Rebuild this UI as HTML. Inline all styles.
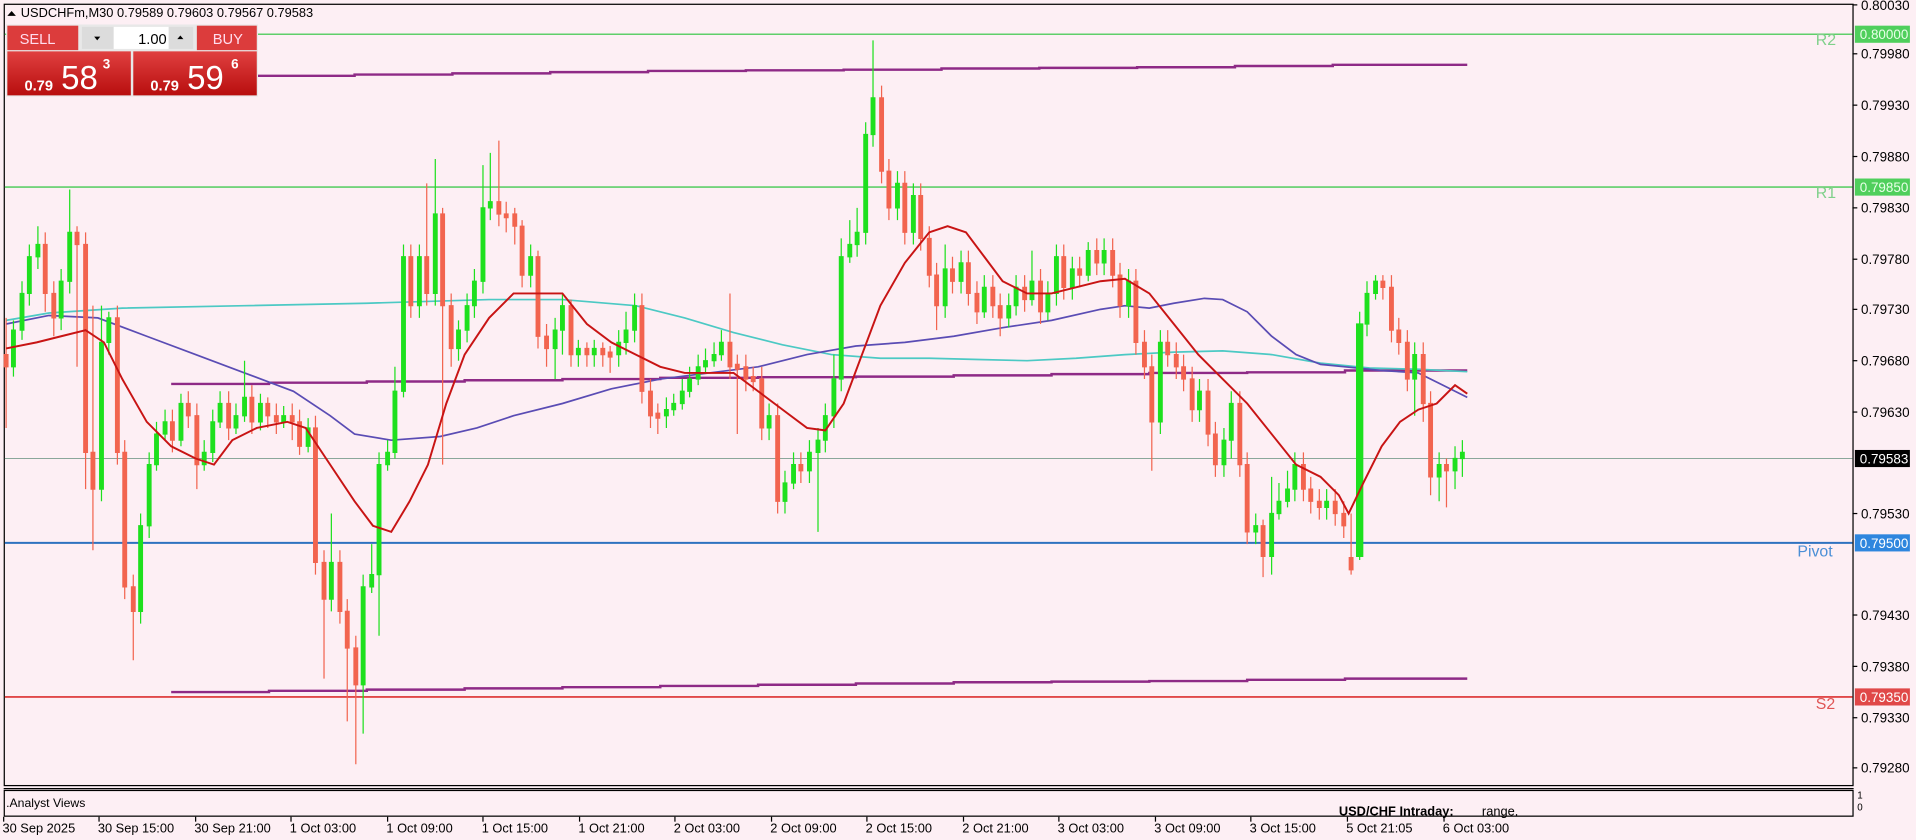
<!DOCTYPE html>
<html><head><meta charset="utf-8"><style>
html,body{margin:0;padding:0;background:#fdeff4;overflow:hidden}
svg{display:block}
text{font-family:"Liberation Sans",sans-serif}
</style></head><body>
<svg width="1916" height="840" viewBox="0 0 1567 687" preserveAspectRatio="none" xmlns="http://www.w3.org/2000/svg">
<rect width="1567" height="687" fill="#fdeff4"/>
<!-- chart frame -->
<rect x="3.5" y="3.5" width="1512" height="639" fill="none" stroke="#000" stroke-width="1"/>
<!-- levels -->
<line x1="4" y1="28" x2="1515" y2="28" stroke="#5fcf6a" stroke-width="1.3"/>
<line x1="4" y1="153" x2="1515" y2="153" stroke="#5fcf6a" stroke-width="1.3"/>
<line x1="4" y1="375" x2="1515" y2="375" stroke="#8aa79a" stroke-width="0.8"/>
<line x1="4" y1="444" x2="1515" y2="444" stroke="#2e72c0" stroke-width="1.6"/>
<line x1="4" y1="570" x2="1515" y2="570" stroke="#e04848" stroke-width="1.6"/>
<text x="1485" y="37" font-size="13" fill="#7fd08a">R2</text>
<text x="1485" y="162" font-size="13" fill="#7fd08a">R1</text>
<text x="1470" y="455" font-size="13" fill="#4b8fd6">Pivot</text>
<text x="1485" y="580" font-size="13" fill="#e05555">S2</text>
<!-- purple pivot lines -->
<g stroke="#8e2a86" stroke-width="2" fill="none">
<path d="M210 62H290V61H370V60H450V59H530V58H610V57.5H690V57H770V56H850V55.5H930V55H1010V54H1090V53H1200"/>
<path d="M140 314H220V313H300V312H380V311H460V310H540V309H620V308.5H700V308H780V307H860V306H940V305H1020V304.5H1100V303H1200"/>
<path d="M140 566H220V565H300V564H380V563H460V562H540V561H620V560H700V559H780V558H860V557.5H940V557H1020V556H1100V555H1200"/>
</g>
<!-- cyan MA -->
<polyline fill="none" stroke="#4cc9c4" stroke-width="1.4" points="5,262 40,256 100,252 200,250 300,248 400,245 460,245 520,250 560,260 600,272 640,282 680,290 720,293 760,293 800,294 840,295 880,293 920,290 960,288 1000,287 1040,290 1080,297 1120,301 1160,302 1200,304"/>
<!-- blue MA -->
<polyline fill="none" stroke="#5a4cb4" stroke-width="1.4" points="5,265 40,258 80,260 120,275 160,290 200,305 240,320 270,340 290,355 320,360 360,357 390,350 420,340 460,330 500,318 540,310 580,305 620,300 660,290 700,283 740,280 780,275 820,268 860,262 900,253 920,250 940,252 960,248 985,244 1000,245 1020,255 1040,275 1060,290 1080,298 1100,300 1130,303 1160,305 1180,315 1200,325"/>
<!-- candles green -->
<g fill="#1ee01e" stroke="#1ee01e" stroke-width="1">
<path d="M11 262V308M9.5 270h3v30h-3z"/>
<path d="M18 230V278M16.5 240h3v30h-3z"/>
<path d="M24 200V250M22.5 210h3v30h-3z"/>
<path d="M31 185V220M29.5 200h3v10h-3z"/>
<path d="M50 220V270M48.5 230h3v30h-3z"/>
<path d="M57 155V240M55.5 190h3v40h-3z"/>
<path d="M83 250V410M81.5 280h3v120h-3z"/>
<path d="M89 255V290M87.5 260h3v20h-3z"/>
<path d="M115 420V510M113.5 430h3v70h-3z"/>
<path d="M122 370V440M120.5 380h3v50h-3z"/>
<path d="M128 345V385M126.5 355h3v25h-3z"/>
<path d="M135 335V360M133.5 345h3v10h-3z"/>
<path d="M148 322V365M146.5 330h3v30h-3z"/>
<path d="M167 360V385M165.5 370h3v10h-3z"/>
<path d="M174 335V378M172.5 345h3v25h-3z"/>
<path d="M180 320V350M178.5 330h3v15h-3z"/>
<path d="M193 330V355M191.5 340h3v10h-3z"/>
<path d="M200 295V345M198.5 325h3v15h-3z"/>
<path d="M213 322V352M211.5 330h3v15h-3z"/>
<path d="M232 332V350M230.5 340h3v5h-3z"/>
<path d="M252 342V370M250.5 350h3v15h-3z"/>
<path d="M271 420V500M269.5 460h3v30h-3z"/>
<path d="M297 470V600M295.5 480h3v80h-3z"/>
<path d="M304 445V485M302.5 470h3v10h-3z"/>
<path d="M310 370V520M308.5 380h3v90h-3z"/>
<path d="M317 360V385M315.5 370h3v10h-3z"/>
<path d="M323 300V375M321.5 320h3v50h-3z"/>
<path d="M330 200V325M328.5 210h3v110h-3z"/>
<path d="M343 200V260M341.5 210h3v40h-3z"/>
<path d="M356 130V250M354.5 175h3v65h-3z"/>
<path d="M375 262V295M373.5 270h3v15h-3z"/>
<path d="M382 240V280M380.5 250h3v20h-3z"/>
<path d="M388 220V260M386.5 230h3v20h-3z"/>
<path d="M395 135V240M393.5 170h3v60h-3z"/>
<path d="M401 125V180M399.5 165h3v5h-3z"/>
<path d="M434 200V235M432.5 210h3v15h-3z"/>
<path d="M454 260V310M452.5 270h3v15h-3z"/>
<path d="M460 240V290M458.5 250h3v20h-3z"/>
<path d="M473 278V300M471.5 285h3v5h-3z"/>
<path d="M486 278V300M484.5 285h3v5h-3z"/>
<path d="M506 270V300M504.5 280h3v10h-3z"/>
<path d="M512 255V290M510.5 270h3v10h-3z"/>
<path d="M519 240V280M517.5 250h3v20h-3z"/>
<path d="M545 325V350M543.5 335h3v5h-3z"/>
<path d="M551 322V340M549.5 330h3v5h-3z"/>
<path d="M558 310V335M556.5 320h3v10h-3z"/>
<path d="M564 300V325M562.5 310h3v10h-3z"/>
<path d="M571 290V315M569.5 300h3v10h-3z"/>
<path d="M577 285V305M575.5 295h3v5h-3z"/>
<path d="M584 280V300M582.5 290h3v5h-3z"/>
<path d="M590 270V295M588.5 280h3v10h-3z"/>
<path d="M629 330V360M627.5 340h3v10h-3z"/>
<path d="M642 385V420M640.5 395h3v15h-3z"/>
<path d="M649 370V400M647.5 380h3v15h-3z"/>
<path d="M662 360V395M660.5 370h3v15h-3z"/>
<path d="M669 350V435M667.5 360h3v10h-3z"/>
<path d="M675 330V370M673.5 340h3v20h-3z"/>
<path d="M682 290V350M680.5 310h3v30h-3z"/>
<path d="M688 195V320M686.5 210h3v100h-3z"/>
<path d="M695 180V215M693.5 200h3v10h-3z"/>
<path d="M701 170V210M699.5 190h3v10h-3z"/>
<path d="M708 100V200M706.5 110h3v80h-3z"/>
<path d="M714 33V120M712.5 80h3v30h-3z"/>
<path d="M734 140V180M732.5 150h3v20h-3z"/>
<path d="M747 150V200M745.5 160h3v30h-3z"/>
<path d="M773 200V260M771.5 220h3v30h-3z"/>
<path d="M786 205V240M784.5 215h3v15h-3z"/>
<path d="M805 225V260M803.5 235h3v20h-3z"/>
<path d="M825 240V268M823.5 250h3v10h-3z"/>
<path d="M831 225V258M829.5 235h3v15h-3z"/>
<path d="M844 205V250M842.5 230h3v15h-3z"/>
<path d="M857 230V262M855.5 240h3v15h-3z"/>
<path d="M864 200V250M862.5 210h3v30h-3z"/>
<path d="M877 210V245M875.5 220h3v15h-3z"/>
<path d="M890 198V230M888.5 205h3v20h-3z"/>
<path d="M903 195V225M901.5 205h3v10h-3z"/>
<path d="M923 220V260M921.5 230h3v20h-3z"/>
<path d="M949 270V355M947.5 280h3v65h-3z"/>
<path d="M981 310V345M979.5 320h3v15h-3z"/>
<path d="M1001 350V390M999.5 360h3v20h-3z"/>
<path d="M1007 320V375M1005.5 330h3v30h-3z"/>
<path d="M1027 420V445M1025.5 430h3v5h-3z"/>
<path d="M1040 390V470M1038.5 420h3v35h-3z"/>
<path d="M1046 395V425M1044.5 410h3v10h-3z"/>
<path d="M1053 385V415M1051.5 400h3v10h-3z"/>
<path d="M1059 370V410M1057.5 380h3v20h-3z"/>
<path d="M1085 400V425M1083.5 410h3v5h-3z"/>
<path d="M1112 255V458M1109.5 265h5v190h-5z"/>
<path d="M1118 230V275M1116.5 240h3v25h-3z"/>
<path d="M1125 225V245M1123.5 230h3v10h-3z"/>
<path d="M1157 280V340M1155.5 290h3v20h-3z"/>
<path d="M1177 370V410M1175.5 380h3v10h-3z"/>
<path d="M1190 365V400M1188.5 375h3v10h-3z"/>
<path d="M1196 360V390M1194.5 370h3v5h-3z"/>
</g>
<!-- candles red -->
<g fill="#f2644f" stroke="#f2644f" stroke-width="1">
<path d="M5 260V350M3.5 290h3v10h-3z"/>
<path d="M37 190V255M35.5 200h3v40h-3z"/>
<path d="M44 230V275M42.5 240h3v20h-3z"/>
<path d="M63 185V300M61.5 190h3v10h-3z"/>
<path d="M70 190V400M68.5 200h3v170h-3z"/>
<path d="M76 250V450M74.5 370h3v30h-3z"/>
<path d="M96 250V380M94.5 260h3v110h-3z"/>
<path d="M102 360V490M100.5 370h3v110h-3z"/>
<path d="M109 470V540M107.5 480h3v20h-3z"/>
<path d="M141 335V370M139.5 345h3v15h-3z"/>
<path d="M154 320V350M152.5 330h3v10h-3z"/>
<path d="M161 330V400M159.5 340h3v40h-3z"/>
<path d="M187 320V360M185.5 330h3v20h-3z"/>
<path d="M206 315V355M204.5 325h3v20h-3z"/>
<path d="M219 325V350M217.5 330h3v10h-3z"/>
<path d="M226 330V355M224.5 340h3v5h-3z"/>
<path d="M239 330V360M237.5 340h3v5h-3z"/>
<path d="M245 335V372M243.5 345h3v20h-3z"/>
<path d="M258 340V470M256.5 350h3v110h-3z"/>
<path d="M265 450V555M263.5 460h3v30h-3z"/>
<path d="M278 450V510M276.5 460h3v40h-3z"/>
<path d="M284 490V590M282.5 500h3v30h-3z"/>
<path d="M291 520V625M289.5 530h3v30h-3z"/>
<path d="M336 200V260M334.5 210h3v40h-3z"/>
<path d="M349 150V250M347.5 210h3v30h-3z"/>
<path d="M362 170V380M360.5 175h3v75h-3z"/>
<path d="M369 240V300M367.5 250h3v35h-3z"/>
<path d="M408 115V185M406.5 165h3v10h-3z"/>
<path d="M414 165V190M412.5 175h3v3h-3z"/>
<path d="M421 170V200M419.5 175h3v10h-3z"/>
<path d="M427 180V235M425.5 185h3v40h-3z"/>
<path d="M440 205V285M438.5 210h3v65h-3z"/>
<path d="M447 265V300M445.5 275h3v10h-3z"/>
<path d="M467 245V300M465.5 250h3v40h-3z"/>
<path d="M480 280V300M478.5 285h3v5h-3z"/>
<path d="M493 280V300M491.5 285h3v5h-3z"/>
<path d="M499 283V305M497.5 288h3v4h-3z"/>
<path d="M525 240V330M523.5 250h3v70h-3z"/>
<path d="M532 310V350M530.5 320h3v20h-3z"/>
<path d="M538 330V355M536.5 338h3v4h-3z"/>
<path d="M597 240V310M595.5 280h3v20h-3z"/>
<path d="M603 290V355M601.5 298h3v4h-3z"/>
<path d="M610 290V320M608.5 300h3v10h-3z"/>
<path d="M616 300V320M614.5 308h3v4h-3z"/>
<path d="M623 300V360M621.5 310h3v40h-3z"/>
<path d="M636 330V420M634.5 340h3v70h-3z"/>
<path d="M655 370V395M653.5 380h3v5h-3z"/>
<path d="M721 70V150M719.5 80h3v60h-3z"/>
<path d="M727 130V180M725.5 140h3v30h-3z"/>
<path d="M740 140V200M738.5 150h3v40h-3z"/>
<path d="M753 150V205M751.5 160h3v35h-3z"/>
<path d="M760 185V235M758.5 195h3v30h-3z"/>
<path d="M766 215V270M764.5 225h3v25h-3z"/>
<path d="M779 210V240M777.5 220h3v10h-3z"/>
<path d="M792 205V250M790.5 215h3v25h-3z"/>
<path d="M799 230V265M797.5 240h3v15h-3z"/>
<path d="M812 225V260M810.5 235h3v15h-3z"/>
<path d="M818 240V275M816.5 250h3v10h-3z"/>
<path d="M838 225V255M836.5 235h3v10h-3z"/>
<path d="M851 220V265M849.5 230h3v25h-3z"/>
<path d="M870 200V245M868.5 210h3v25h-3z"/>
<path d="M883 210V235M881.5 220h3v5h-3z"/>
<path d="M897 195V225M895.5 205h3v10h-3z"/>
<path d="M910 195V235M908.5 205h3v20h-3z"/>
<path d="M916 215V260M914.5 225h3v25h-3z"/>
<path d="M929 220V290M927.5 230h3v50h-3z"/>
<path d="M936 270V310M934.5 280h3v20h-3z"/>
<path d="M942 290V385M940.5 300h3v45h-3z"/>
<path d="M955 270V300M953.5 280h3v10h-3z"/>
<path d="M962 280V310M960.5 290h3v10h-3z"/>
<path d="M968 290V320M966.5 300h3v10h-3z"/>
<path d="M975 300V345M973.5 310h3v25h-3z"/>
<path d="M988 310V365M986.5 320h3v35h-3z"/>
<path d="M994 345V390M992.5 355h3v25h-3z"/>
<path d="M1014 320V390M1012.5 330h3v50h-3z"/>
<path d="M1020 370V445M1018.5 380h3v55h-3z"/>
<path d="M1033 425V472M1031.5 430h3v25h-3z"/>
<path d="M1066 370V410M1064.5 380h3v20h-3z"/>
<path d="M1072 390V420M1070.5 400h3v10h-3z"/>
<path d="M1079 400V425M1077.5 410h3v5h-3z"/>
<path d="M1092 400V430M1090.5 410h3v10h-3z"/>
<path d="M1099 410V440M1097.5 420h3v10h-3z"/>
<path d="M1105 420V470M1103.5 456h3v10h-3z"/>
<path d="M1131 225V245M1129.5 230h3v5h-3z"/>
<path d="M1138 225V280M1136.5 235h3v35h-3z"/>
<path d="M1144 260V290M1142.5 270h3v10h-3z"/>
<path d="M1151 270V320M1149.5 280h3v30h-3z"/>
<path d="M1164 280V345M1162.5 290h3v40h-3z"/>
<path d="M1170 320V405M1168.5 330h3v60h-3z"/>
<path d="M1183 375V415M1181.5 380h3v5h-3z"/>
</g>
<!-- red MA -->
<polyline fill="none" stroke="#c81414" stroke-width="1.6" points="5,285 30,280 50,275 70,270 85,280 100,310 120,345 140,365 160,375 175,380 190,360 210,350 235,345 250,350 270,380 290,410 305,430 320,435 335,410 350,380 365,330 380,290 400,260 420,240 440,240 460,240 480,265 500,280 520,290 540,300 560,305 580,305 600,305 620,320 640,335 660,350 675,352 690,330 705,290 720,250 740,215 760,190 775,185 790,190 805,210 820,230 840,240 860,240 880,235 900,230 920,228 940,240 960,265 980,290 1000,310 1020,330 1040,355 1060,380 1080,390 1095,405 1103,420 1115,395 1130,365 1145,345 1160,335 1175,330 1190,315 1200,322"/>
<!-- right axis -->
<g font-size="11" fill="#000">
<g stroke="#000" stroke-width="1">
<line x1="1515" y1="4" x2="1519" y2="4"/><line x1="1515" y1="44" x2="1519" y2="44"/><line x1="1515" y1="86" x2="1519" y2="86"/><line x1="1515" y1="128" x2="1519" y2="128"/><line x1="1515" y1="170" x2="1519" y2="170"/><line x1="1515" y1="212" x2="1519" y2="212"/><line x1="1515" y1="253" x2="1519" y2="253"/><line x1="1515" y1="295" x2="1519" y2="295"/><line x1="1515" y1="337" x2="1519" y2="337"/><line x1="1515" y1="420" x2="1519" y2="420"/><line x1="1515" y1="503" x2="1519" y2="503"/><line x1="1515" y1="545" x2="1519" y2="545"/><line x1="1515" y1="587" x2="1519" y2="587"/><line x1="1515" y1="628" x2="1519" y2="628"/>
</g>
<text x="1522" y="8">0.80030</text><text x="1522" y="48">0.79980</text><text x="1522" y="90">0.79930</text><text x="1522" y="132">0.79880</text><text x="1522" y="174">0.79830</text><text x="1522" y="216">0.79780</text><text x="1522" y="257">0.79730</text><text x="1522" y="299">0.79680</text><text x="1522" y="341">0.79630</text><text x="1522" y="424">0.79530</text><text x="1522" y="507">0.79430</text><text x="1522" y="549">0.79380</text><text x="1522" y="591">0.79330</text><text x="1522" y="632">0.79280</text>
</g>
<rect x="1517" y="21" width="45" height="14" fill="#4fcf5c"/><text x="1521" y="32" font-size="11" fill="#e8ffe8">0.80000</text>
<rect x="1517" y="146" width="45" height="14" fill="#4fcf5c"/><text x="1521" y="157" font-size="11" fill="#e8ffe8">0.79850</text>
<rect x="1517" y="368" width="45" height="14" fill="#000"/><text x="1521" y="379" font-size="11" fill="#fff">0.79583</text>
<rect x="1517" y="437" width="45" height="14" fill="#2e86de"/><text x="1521" y="448" font-size="11" fill="#fff">0.79500</text>
<rect x="1517" y="563" width="45" height="14" fill="#e04848"/><text x="1521" y="574" font-size="11" fill="#fff">0.79350</text>
<!-- bottom panel -->
<rect x="3.5" y="646.5" width="1512" height="21" fill="none" stroke="#000" stroke-width="1"/>
<line x1="3" y1="645" x2="1516" y2="645" stroke="#000" stroke-width="1"/>
<text x="5" y="660" font-size="10" fill="#000">.Analyst Views</text>
<text x="1095" y="667" font-size="10.5" font-weight="bold" fill="#000">USD/CHF Intraday:</text>
<text x="1212" y="667" font-size="10.5" fill="#000">range.</text>
<text x="1519" y="653" font-size="8" fill="#000">1</text>
<text x="1519" y="663" font-size="8" fill="#000">0</text>
<!-- time axis -->
<g stroke="#000" stroke-width="1">
<line x1="3" y1="668" x2="3" y2="672"/><line x1="81" y1="668" x2="81" y2="672"/><line x1="160" y1="668" x2="160" y2="672"/><line x1="238" y1="668" x2="238" y2="672"/><line x1="317" y1="668" x2="317" y2="672"/><line x1="395" y1="668" x2="395" y2="672"/><line x1="474" y1="668" x2="474" y2="672"/><line x1="552" y1="668" x2="552" y2="672"/><line x1="631" y1="668" x2="631" y2="672"/><line x1="709" y1="668" x2="709" y2="672"/><line x1="788" y1="668" x2="788" y2="672"/><line x1="866" y1="668" x2="866" y2="672"/><line x1="945" y1="668" x2="945" y2="672"/><line x1="1023" y1="668" x2="1023" y2="672"/><line x1="1102" y1="668" x2="1102" y2="672"/><line x1="1181" y1="668" x2="1181" y2="672"/>
</g>
<g font-size="10.5" fill="#000">
<text x="2" y="681">30 Sep 2025</text><text x="80" y="681">30 Sep 15:00</text><text x="159" y="681">30 Sep 21:00</text><text x="237" y="681">1 Oct 03:00</text><text x="316" y="681">1 Oct 09:00</text><text x="394" y="681">1 Oct 15:00</text><text x="473" y="681">1 Oct 21:00</text><text x="551" y="681">2 Oct 03:00</text><text x="630" y="681">2 Oct 09:00</text><text x="708" y="681">2 Oct 15:00</text><text x="787" y="681">2 Oct 21:00</text><text x="865" y="681">3 Oct 03:00</text><text x="944" y="681">3 Oct 09:00</text><text x="1022" y="681">3 Oct 15:00</text><text x="1101" y="681">5 Oct 21:05</text><text x="1180" y="681">6 Oct 03:00</text>
</g>
<!-- title -->
<path d="M6 13l3.5-4 3.5 4z" fill="#000"/>
<text x="17" y="14" font-size="10.5" fill="#000">USDCHFm,M30  0.79589 0.79603 0.79567 0.79583</text>
<!-- one-click trading -->
<defs>
<linearGradient id="rg" x1="0" y1="0" x2="0" y2="1"><stop offset="0" stop-color="#e04040"/><stop offset="1" stop-color="#b80e0e"/></linearGradient>
</defs>
<rect x="5" y="20" width="206" height="59" fill="#e8e8e8"/>
<rect x="6" y="21" width="58" height="20" fill="#dc3c3c"/>
<text x="16" y="36" font-size="12" fill="#fde">SELL</text>
<rect x="67" y="22" width="26" height="18" fill="#dcdcdc"/>
<path d="M77 30h5l-2.5 3z" fill="#000"/>
<rect x="93" y="22" width="45" height="18" fill="#fff"/>
<text x="113" y="36" font-size="12" fill="#000">1.00</text>
<rect x="138" y="22" width="20" height="18" fill="#dcdcdc"/>
<path d="M145 32h5l-2.5-3z" fill="#000"/>
<rect x="161" y="21" width="49" height="20" fill="#dc3c3c"/>
<text x="174" y="36" font-size="12" fill="#fde">BUY</text>
<rect x="6" y="42" width="101" height="36" fill="url(#rg)"/>
<rect x="109" y="42" width="101" height="36" fill="url(#rg)"/>
<text x="20" y="74" font-size="12" font-weight="bold" fill="#fff">0.79</text>
<text x="50" y="73" font-size="27" fill="#fff">58</text>
<text x="84" y="56" font-size="11" font-weight="bold" fill="#fff">3</text>
<text x="123" y="74" font-size="12" font-weight="bold" fill="#fff">0.79</text>
<text x="153" y="73" font-size="27" fill="#fff">59</text>
<text x="189" y="56" font-size="11" font-weight="bold" fill="#fff">6</text>
</svg>
</body></html>
